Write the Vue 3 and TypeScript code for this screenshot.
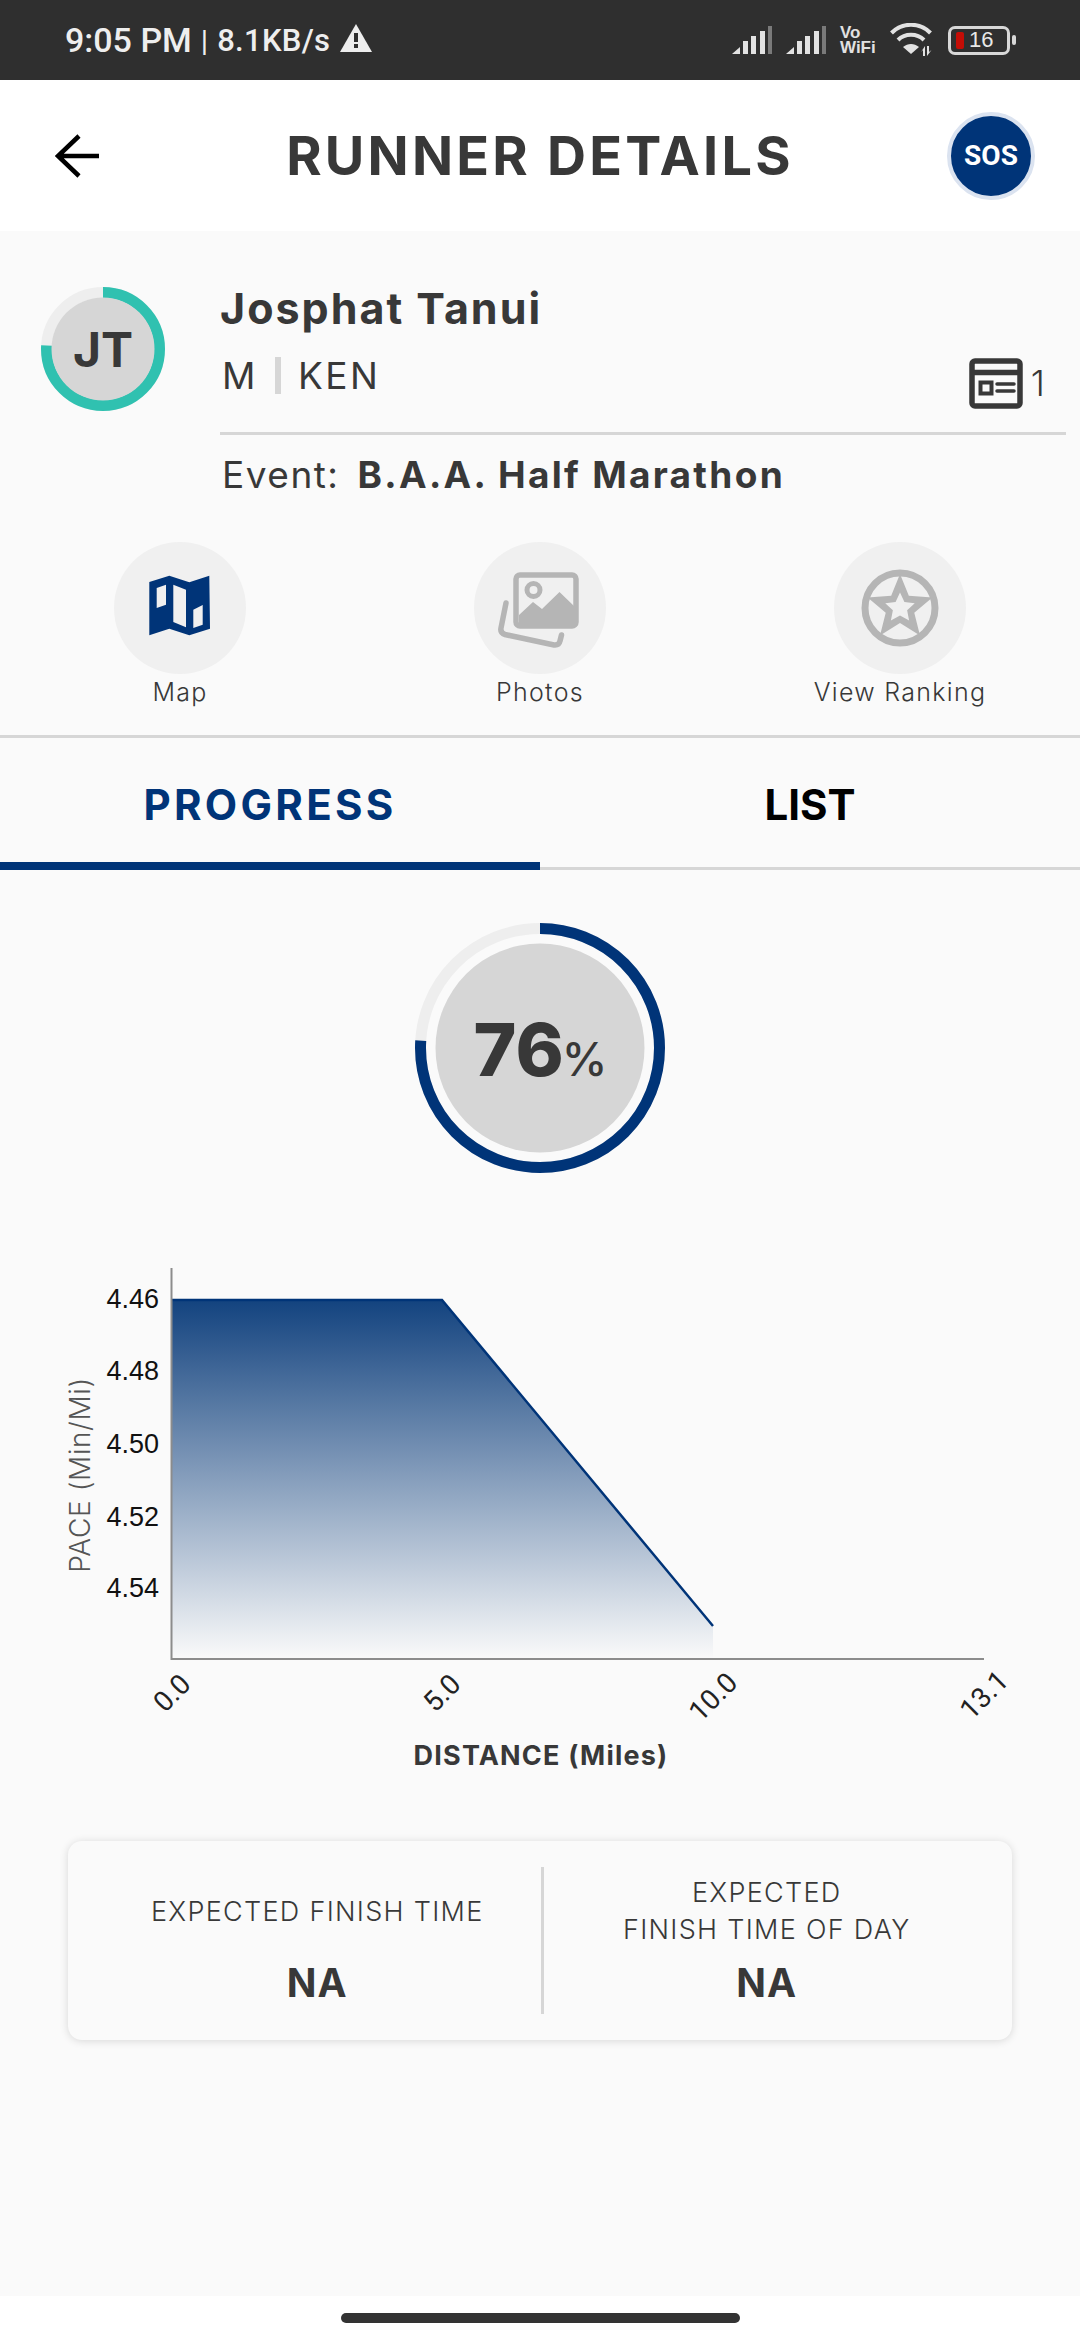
<script setup lang="ts">
const paceTicks = [
  { label: '4.46', y: 1299 },
  { label: '4.48', y: 1371 },
  { label: '4.50', y: 1444 },
  { label: '4.52', y: 1517 },
  { label: '4.54', y: 1588 },
]

const distanceTicks = [
  { label: '0.0', x: 172, y: 1693 },
  { label: '5.0', x: 442, y: 1693 },
  { label: '10.0', x: 713, y: 1697 },
  { label: '13.1', x: 984, y: 1695 },
]

const signalBars = [
  { x: 11, w: 5, h: 13 },
  { x: 19, w: 5, h: 18 },
  { x: 28, w: 5, h: 23 },
]

function starPoints(outer: number, inner: number) {
  const pts: string[] = []
  for (let i = 0; i < 10; i++) {
    const r = i % 2 === 0 ? outer : inner
    const a = (Math.PI / 5) * i - Math.PI / 2
    pts.push(`${(r * Math.cos(a)).toFixed(2)},${(r * Math.sin(a)).toFixed(2)}`)
  }
  return pts.join(' ')
}
</script>

<template>
  <div class="screen">
    <div class="status-bar">
      <div class="status-left">
        <span class="clock">9:05 PM</span>
        <span class="sep">|</span>
        <span class="speed">8.1KB/s</span>
        <svg class="warn" width="32" height="28" viewBox="0 0 32 28">
          <path d="M16 0 L32 28 H0 Z" fill="#eeeeee" />
          <rect x="14" y="9" width="4" height="9" fill="#2f2f2f" />
          <rect x="14" y="20" width="4" height="4" fill="#2f2f2f" />
        </svg>
      </div>
      <div class="status-right">
        <svg v-for="n in 2" :key="n" class="signal" width="40" height="28" viewBox="0 0 40 28">
          <path d="M0 28 L8 21 V28 Z" fill="#e2e2e2" />
          <rect v-for="b in signalBars" :key="b.x" :x="b.x" :y="28 - b.h" :width="b.w" height="28" fill="#e2e2e2" />
          <rect x="36" y="0" width="4.5" height="28" fill="#7a7a7a" />
        </svg>
        <div class="vowifi"><span>Vo</span><span>WiFi</span></div>
        <svg class="wifi" width="44" height="34" viewBox="0 0 44 34">
          <path d="M1.5 10 C12 -1 30 -1 40.5 10" fill="none" stroke="#e2e2e2" stroke-width="4" />
          <path d="M8 17 C15 10 27 10 34 17" fill="none" stroke="#e2e2e2" stroke-width="4" />
          <path d="M13 24 C18 20 24 20 29 24 L21 31 Z" fill="#e2e2e2" />
          <path d="M35 23 V33 H33 V27 L31 29 Z M37 33 V23 H39 V29 L41.5 27 Z" fill="#e2e2e2" />
        </svg>
        <div class="battery">
          <div class="battery-body">
            <i class="battery-level"></i>
            <span>16</span>
          </div>
          <i class="battery-nub"></i>
        </div>
      </div>
    </div>

    <header class="app-bar">
      <button class="back" type="button" aria-label="Back">
        <svg width="44" height="44" viewBox="0 0 44 44">
          <path d="M24 2 L3 22 L24 42 M3 22 H44" fill="none" stroke="#000" stroke-width="4.5" />
        </svg>
      </button>
      <h1 class="title">RUNNER DETAILS</h1>
      <div class="sos-wrap">
        <div class="sos">SOS</div>
      </div>
    </header>

    <main class="content">
      <section class="profile">
        <div class="avatar">
          <svg width="124" height="124" viewBox="0 0 124 124">
            <circle cx="62" cy="62" r="56.5" fill="none" stroke="#eeeeee" stroke-width="11" />
            <circle cx="62" cy="62" r="56.5" fill="none" stroke="#30c1b0" stroke-width="11" pathLength="100"
              stroke-dasharray="76 24" transform="rotate(-90 62 62)" />
            <circle cx="62" cy="62" r="51.5" fill="#d6d6d6" />
          </svg>
          <span class="initials">JT</span>
        </div>
        <div class="info">
          <div class="name">Josphat Tanui</div>
          <div class="meta">
            <span class="meta-text">M</span>
            <i class="meta-sep"></i>
            <span class="meta-text">KEN</span>
            <div class="bib">
              <svg width="54" height="51" viewBox="0 0 54 51">
                <rect x="3" y="3" width="48" height="45" rx="3" fill="none" stroke="#383838" stroke-width="5.5" />
                <path d="M3 14.5 H51" stroke="#383838" stroke-width="5.5" />
                <rect x="11.5" y="24.5" width="11" height="11" fill="none" stroke="#383838" stroke-width="4" />
                <path d="M28 26 H45 M28 33 H45" stroke="#383838" stroke-width="3.5" stroke-linecap="round" />
              </svg>
              <span class="bib-count">1</span>
            </div>
          </div>
          <div class="event">Event:<b>B.A.A. Half Marathon</b></div>
        </div>
      </section>

      <section class="actions">
        <div class="action">
          <div class="action-icon">
            <svg width="100" height="100" viewBox="0 0 100 100">
              <path fill="#003478" fill-rule="evenodd"
                d="M19.3 24 L39.3 17.7 L59.3 24.3 L79.3 17.7 L80 70.7 L59.3 77.3 L39.3 70.7 L19.3 77.3 Z
                   M26.7 30 V50 L36 46.7 V26.7 Z
                   M43.3 26.7 V64 L56 69.3 V31.7 Z
                   M63.3 51.7 V70 L72.7 66.7 V47 Z" />
            </svg>
          </div>
          <span class="action-label">Map</span>
        </div>
        <div class="action">
          <div class="action-icon">
            <svg width="120" height="96" viewBox="0 0 120 96">
              <rect x="36" y="15" width="60" height="51" rx="4" fill="none" stroke="#b5b5b5" stroke-width="5.5" />
              <path d="M39 55 L53 42 L62 49 L79.5 32 L94 46 V64 H39 Z" fill="#b5b5b5" />
              <circle cx="53.5" cy="30" r="6.5" fill="none" stroke="#b5b5b5" stroke-width="5" />
              <path d="M26 43 L21 68 Q20 73 25 74.5 L74 85 Q79 85.5 80 81 L81.5 75" fill="none" stroke="#b5b5b5"
                stroke-width="5.5" stroke-linecap="round" />
            </svg>
          </div>
          <span class="action-label">Photos</span>
        </div>
        <div class="action">
          <div class="action-icon">
            <svg width="80" height="80" viewBox="-40 -40 80 80">
              <circle r="35" fill="none" stroke="#b5b5b5" stroke-width="7" />
              <polygon :points="starPoints(34, 15)" fill="#b5b5b5" />
              <polygon :points="starPoints(15.5, 7.5)" fill="#f0f0f0" />
            </svg>
          </div>
          <span class="action-label">View Ranking</span>
        </div>
      </section>

      <nav class="tabs">
        <div class="tab active">PROGRESS</div>
        <div class="tab">LIST</div>
      </nav>

      <section class="progress">
        <div class="progress-ring">
          <svg width="250" height="250" viewBox="0 0 250 250">
            <circle cx="125" cy="125" r="119.5" fill="none" stroke="#eeeeee" stroke-width="11" />
            <circle cx="125" cy="125" r="119.5" fill="none" stroke="#003478" stroke-width="11" pathLength="100"
              stroke-dasharray="76 24" transform="rotate(-90 125 125)" />
            <circle cx="125" cy="125" r="104.5" fill="#d6d6d6" />
          </svg>
          <div class="progress-value"><span class="pct">76</span><span class="pct-sign">%</span></div>
        </div>
      </section>

      <svg class="chart" width="1080" height="550" viewBox="0 1240 1080 550">
        <defs>
          <linearGradient id="paceFill" gradientUnits="userSpaceOnUse" x1="0" y1="1300" x2="0" y2="1659">
            <stop offset="0" stop-color="#13437f" />
            <stop offset="1" stop-color="#fafafa" />
          </linearGradient>
        </defs>
        <polygon points="172,1300 442,1300 713,1626 713,1659 172,1659" fill="url(#paceFill)" />
        <polyline points="172,1300 442,1300 713,1626" fill="none" stroke="#003478" stroke-width="2.5" />
        <path d="M171.5 1268 V1659 H984" fill="none" stroke="#8c8c8c" stroke-width="2" />
        <text v-for="t in paceTicks" :key="t.label" class="pace-tick" x="159" :y="t.y" text-anchor="end"
          dominant-baseline="central">{{ t.label }}</text>
        <text class="axis-y" transform="translate(80 1475) rotate(-90)" text-anchor="middle"
          dominant-baseline="central">PACE (Min/Mi)</text>
        <text v-for="t in distanceTicks" :key="t.label" class="distance-tick" :transform="`translate(${t.x} ${t.y}) rotate(-45)`"
          text-anchor="middle" dominant-baseline="central">{{ t.label }}</text>
        <text class="axis-x" x="541" y="1755" text-anchor="middle" dominant-baseline="central">DISTANCE (Miles)</text>
      </svg>

      <section class="finish-card">
        <div class="finish-cell left">
          <div class="finish-label">EXPECTED FINISH TIME</div>
          <div class="finish-value">NA</div>
        </div>
        <i class="finish-sep"></i>
        <div class="finish-cell right">
          <div class="finish-label">EXPECTED<br />FINISH TIME OF DAY</div>
          <div class="finish-value">NA</div>
        </div>
      </section>
    </main>

    <div class="nav-bar"><i class="nav-pill"></i></div>
  </div>
</template>

<style>
html,
body {
  margin: 0;
  background: #fafafa;
}
</style>

<style scoped>
.screen {
  display: flex;
  flex-direction: column;
  width: 1080px;
  height: 2340px;
  overflow: hidden;
  font-family: Inter, "Liberation Sans", sans-serif;
  color: #383838;
  background: #fafafa;
}

.status-bar {
  display: flex;
  flex: none;
  align-items: center;
  justify-content: space-between;
  height: 80px;
  padding: 0 64px 0 65px;
  box-sizing: border-box;
  color: #eeeeee;
  background: #2f2f2f;
  font-family: Roboto, sans-serif;
}

.status-left {
  display: flex;
  align-items: center;
  font-weight: 500;
}

.clock {
  font-size: 34px;
}

.sep {
  margin: 0 9px 0 9px;
  font-size: 30px;
  font-weight: 400;
}

.speed {
  font-size: 31px;
  letter-spacing: 0.3px;
}

.warn {
  margin: -4px 0 0 10px;
}

.status-right {
  display: flex;
  align-items: center;
}

.signal {
  margin-right: 14px;
}

.vowifi {
  display: flex;
  flex-direction: column;
  align-items: flex-start;
  width: 38px;
  margin-right: 12px;
  font-family: "Liberation Sans", sans-serif;
  font-size: 17px;
  font-weight: 700;
  line-height: 15px;
  color: #e2e2e2;
}

.wifi {
  margin-right: 14px;
}

.battery {
  display: flex;
  align-items: center;
  gap: 2px;
}

.battery-body {
  display: flex;
  align-items: center;
  width: 62px;
  height: 29px;
  padding-left: 5px;
  box-sizing: border-box;
  border: 3px solid #d8d8d8;
  border-radius: 7px;
}

.battery-level {
  display: block;
  width: 8px;
  height: 17px;
  border-radius: 2px;
  background: #c40d06;
}

.battery-body span {
  margin-left: 5px;
  font-family: "Liberation Sans", sans-serif;
  font-size: 22px;
  color: #e8e8e8;
}

.battery-nub {
  display: block;
  width: 4px;
  height: 10px;
  border-radius: 2px;
  background: #d8d8d8;
}

.app-bar {
  display: grid;
  flex: none;
  grid-template-columns: 1fr auto 1fr;
  align-items: center;
  height: 151px;
  background: #ffffff;
}

.back {
  display: block;
  width: 44px;
  height: 44px;
  margin-left: 55px;
  padding: 0;
  border: 0;
  background: none;
}

.back svg {
  display: block;
}

.title {
  margin: 0;
  font-size: 54px;
  font-weight: 700;
  line-height: 60px;
  letter-spacing: 3.2px;
  color: #383838;
}

.sos-wrap {
  display: flex;
  justify-content: flex-end;
  padding-right: 45px;
}

.sos {
  display: flex;
  align-items: center;
  justify-content: center;
  width: 80px;
  height: 80px;
  border: 4px solid #dbe3f0;
  border-radius: 50%;
  color: #ffffff;
  background: #003478;
  font-family: Roboto, sans-serif;
  font-size: 28px;
  font-weight: 700;
}

.content {
  display: flex;
  flex: 1;
  flex-direction: column;
  min-height: 0;
}

.profile {
  display: flex;
  height: 311px;
}

.avatar {
  position: relative;
  flex: none;
  width: 124px;
  height: 124px;
  margin: 56px 55px 0 41px;
}

.avatar svg {
  display: block;
}

.initials {
  position: absolute;
  inset: 0;
  display: flex;
  align-items: center;
  justify-content: center;
  font-size: 48px;
  font-weight: 700;
}

.info {
  flex: 1;
  padding: 47px 14px 0 0;
}

.name {
  font-size: 43px;
  font-weight: 700;
  line-height: 60px;
  letter-spacing: 2px;
}

.meta {
  display: flex;
  align-items: center;
  height: 75px;
  padding-left: 2px;
  margin-bottom: 19px;
}

.meta-text {
  font-size: 37px;
  font-weight: 400;
  letter-spacing: 2.5px;
}

.meta-sep {
  display: block;
  width: 6px;
  height: 37px;
  margin: 0 17px 0 17px;
  background: #d6d6d6;
}

.bib {
  display: flex;
  align-items: center;
  margin: 15px 21px 0 auto;
}

.bib svg {
  display: block;
}

.bib-count {
  margin-left: 8px;
  font-size: 36px;
  font-weight: 300;
  line-height: 40px;
}

.event {
  height: 80px;
  padding-left: 2px;
  border-top: 3px solid #d6d6d6;
  font-size: 37px;
  line-height: 80px;
  letter-spacing: 1.5px;
  box-sizing: content-box;
}

.event b {
  margin-left: 18px;
  font-weight: 700;
  letter-spacing: 2.3px;
}

.actions {
  display: grid;
  grid-template-columns: repeat(3, 1fr);
  height: 193px;
  border-bottom: 3px solid #d6d6d6;
  box-sizing: content-box;
}

.action {
  display: flex;
  flex-direction: column;
  align-items: center;
}

.action-icon {
  display: flex;
  align-items: center;
  justify-content: center;
  width: 132px;
  height: 132px;
  border-radius: 50%;
  background: #f0f0f0;
}

.action-label {
  font-size: 25px;
  font-weight: 300;
  line-height: 36px;
  letter-spacing: 1.3px;
}

.tabs {
  display: flex;
  flex: none;
  height: 132px;
}

.tab {
  flex: 1;
  padding-top: 37px;
  box-sizing: border-box;
  border-bottom: 3px solid #d6d6d6;
  font-size: 42px;
  font-weight: 700;
  line-height: 60px;
  text-align: center;
  color: #000000;
}

.tab.active {
  border-bottom: 8px solid #003478;
  letter-spacing: 3.3px;
  color: #003478;
}

.progress {
  display: flex;
  justify-content: center;
  padding-top: 53px;
}

.progress-ring {
  position: relative;
  width: 250px;
  height: 250px;
  margin-left: -1px;
}

.progress-ring svg {
  display: block;
}

.progress-value {
  position: absolute;
  inset: 0;
  display: flex;
  align-items: baseline;
  justify-content: center;
  padding: 87px 0 0 2px;
  box-sizing: border-box;
  line-height: 80px;
}

.pct {
  font-size: 73px;
  font-weight: 800;
}

.pct-sign {
  margin-left: -2px;
  font-size: 46px;
  font-weight: 500;
}

.chart {
  display: block;
  flex: none;
  margin-top: 67px;
}

.pace-tick {
  font-family: "Liberation Sans", sans-serif;
  font-size: 27px;
  fill: #111111;
}

.axis-y {
  font-size: 28px;
  font-weight: 300;
  letter-spacing: 0.6px;
  fill: #555555;
}

.distance-tick {
  font-family: Roboto, sans-serif;
  font-size: 28px;
  fill: #222222;
}

.axis-x {
  font-size: 27px;
  font-weight: 700;
  letter-spacing: 1.2px;
  fill: #383838;
}

.finish-card {
  display: flex;
  flex: none;
  height: 199px;
  margin: 51px 68px 0;
  padding-top: 26px;
  box-sizing: border-box;
  border-radius: 14px;
  background: #fafafa;
  box-shadow: 0 1px 8px rgba(0, 0, 0, 0.14);
}

.finish-cell {
  flex: 1;
  padding-top: 7px;
  text-align: center;
}

.finish-cell.left {
  padding-left: 26px;
}

.finish-cell.right {
  padding-right: 22px;
}

.finish-sep {
  display: block;
  flex: none;
  width: 3px;
  height: 147px;
  background: #d6d6d6;
}

.finish-label {
  display: flex;
  align-items: center;
  justify-content: center;
  height: 74px;
  font-size: 27px;
  font-weight: 300;
  line-height: 37px;
  letter-spacing: 1.3px;
}

.finish-value {
  margin-top: 10px;
  font-size: 39px;
  font-weight: 700;
  line-height: 50px;
  letter-spacing: 1px;
}

.nav-bar {
  display: flex;
  flex: none;
  align-items: center;
  justify-content: center;
  height: 44px;
  background: #ffffff;
}

.nav-pill {
  display: block;
  width: 399px;
  height: 10px;
  border-radius: 5px;
  background: #333333;
}
</style>
